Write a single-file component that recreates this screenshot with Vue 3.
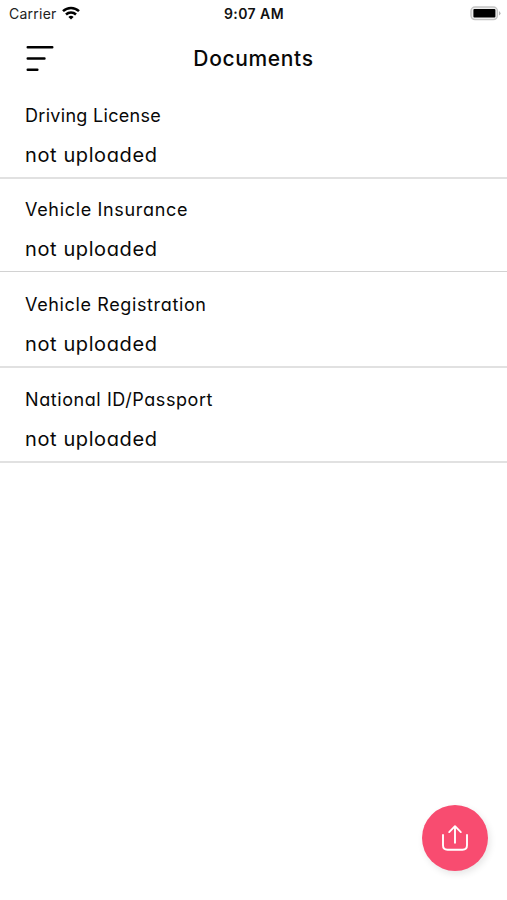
<script setup>
const documents = [
  { title: 'Driving License', status: 'not uploaded', key: 'license' },
  { title: 'Vehicle Insurance', status: 'not uploaded', key: 'insurance' },
  { title: 'Vehicle Registration', status: 'not uploaded', key: 'registration' },
  { title: 'National ID/Passport', status: 'not uploaded', key: 'passport' },
]
</script>

<template>
  <main class="screen">
    <div class="statusbar">
      <div class="network">
        <span class="carrier">Carrier</span>
        <svg class="wifi" width="18" height="14" viewBox="0 0 18 14" fill="none" stroke="#000" stroke-width="2.5">
          <path d="M1 5.1C5.5 .85 12.5 .85 17 5.1" />
          <path d="M4 8.5C6.8 5.8 11.2 5.8 14 8.5" />
          <path d="M6.4 10.9Q9 8.8 11.6 10.9L9 13.6Z" fill="#000" stroke="none" />
        </svg>
      </div>
      <span class="time">9:07 AM</span>
      <svg class="battery" width="31" height="15" viewBox="0 0 31 15">
        <rect x="1" y="1" width="26.4" height="12.6" rx="4" fill="#eee" stroke="#c4c4c4" stroke-width="1.4" />
        <rect x="3.4" y="3.1" width="22" height="8.4" rx="1" fill="#000" />
        <path d="M29 5q3 2.3 0 4.6z" fill="#b4b4b4" />
      </svg>
    </div>

    <header class="header">
      <svg class="menu" width="28" height="28" viewBox="0 0 28 28" stroke="#000" stroke-width="2.4" stroke-linecap="round">
        <path d="M1.7 2.3H26.3M1.7 13.5H18.5M1.7 24.8H11.4" />
      </svg>
      <h1>Documents</h1>
    </header>

    <ul class="documents">
      <li v-for="doc in documents" :key="doc.key" :class="doc.key">
        <div class="title"><span>{{ doc.title }}</span></div>
        <div class="status"><span>{{ doc.status }}</span></div>
      </li>
    </ul>

    <button class="upload" aria-label="Upload document">
      <svg width="28" height="28" viewBox="0 0 28 28" fill="none" stroke="#fff" stroke-width="1.9" stroke-linecap="round" stroke-linejoin="round">
        <path d="M2 11V21.2Q2 25.7 6.5 25.7H21.5Q26 25.7 26 21.2V11" />
        <path d="M14 18.8V2.4M8.2 8.1L14 2.2L19.8 8.1" />
      </svg>
    </button>
  </main>
</template>

<style>
body { margin: 0; background: #fff; }
</style>

<style scoped>
.screen {
  position: relative;
  width: 507px;
  height: 900px;
  overflow: hidden;
  background: #fff;
  color: #080808;
  font-family: Inter, "Liberation Sans", sans-serif;
}
.statusbar {
  box-sizing: border-box;
  display: grid;
  grid-template-columns: 1fr auto 1fr;
  height: 28px;
  padding: 0 6px 0 9px;
  align-items: center;
  line-height: 28px;
}
.network { display: flex; align-items: center; gap: 5px; }
.carrier { font-size: 14px; letter-spacing: 0.25px; color: #222; }
.wifi { margin-top: -2px; }
.time { margin-right: 2px; font-size: 14px; font-weight: 600; letter-spacing: 0.45px; color: #111; }
.battery { justify-self: end; margin-top: -2px; }
.header {
  display: grid;
  grid-template-columns: 1fr auto 1fr;
  height: 56px;
  padding: 0 26px;
  align-items: center;
}
h1 {
  margin: 6px 0 0;
  font-size: 21px;
  font-weight: 500;
  line-height: 30px;
  letter-spacing: 0.65px;
}
.menu { margin-top: 5px; }
.documents {
  margin: 0;
  padding: 0;
  list-style: none;
  font-feature-settings: "cv11";
}
.documents li {
  box-sizing: border-box;
  height: 95px;
  padding: 18px 25px 0;
  border-bottom: 2px solid #e1e1e1;
}
.title { height: 27px; font-size: 18px; line-height: 27px; }
.status { height: 30px; margin-top: 11px; font-size: 20px; line-height: 30px; letter-spacing: 0.6px; }
.license .title { letter-spacing: 0.3px; }
.documents .insurance { height: 93px; padding-top: 17px; border-bottom: 1px solid #d2d2d2; }
.insurance .title { letter-spacing: 0.67px; }
.documents .registration { height: 96px; padding-top: 19px; }
.registration .title { letter-spacing: 0.63px; }
.passport .title { letter-spacing: 0.58px; }
.upload {
  position: absolute;
  right: 19px;
  bottom: 29px;
  display: flex;
  width: 66px;
  height: 66px;
  padding: 0;
  align-items: center;
  justify-content: center;
  border: 0;
  border-radius: 50%;
  background: #f84c70;
  box-shadow: 2px 3px 7px rgba(0, 0, 0, 0.1);
}
</style>
